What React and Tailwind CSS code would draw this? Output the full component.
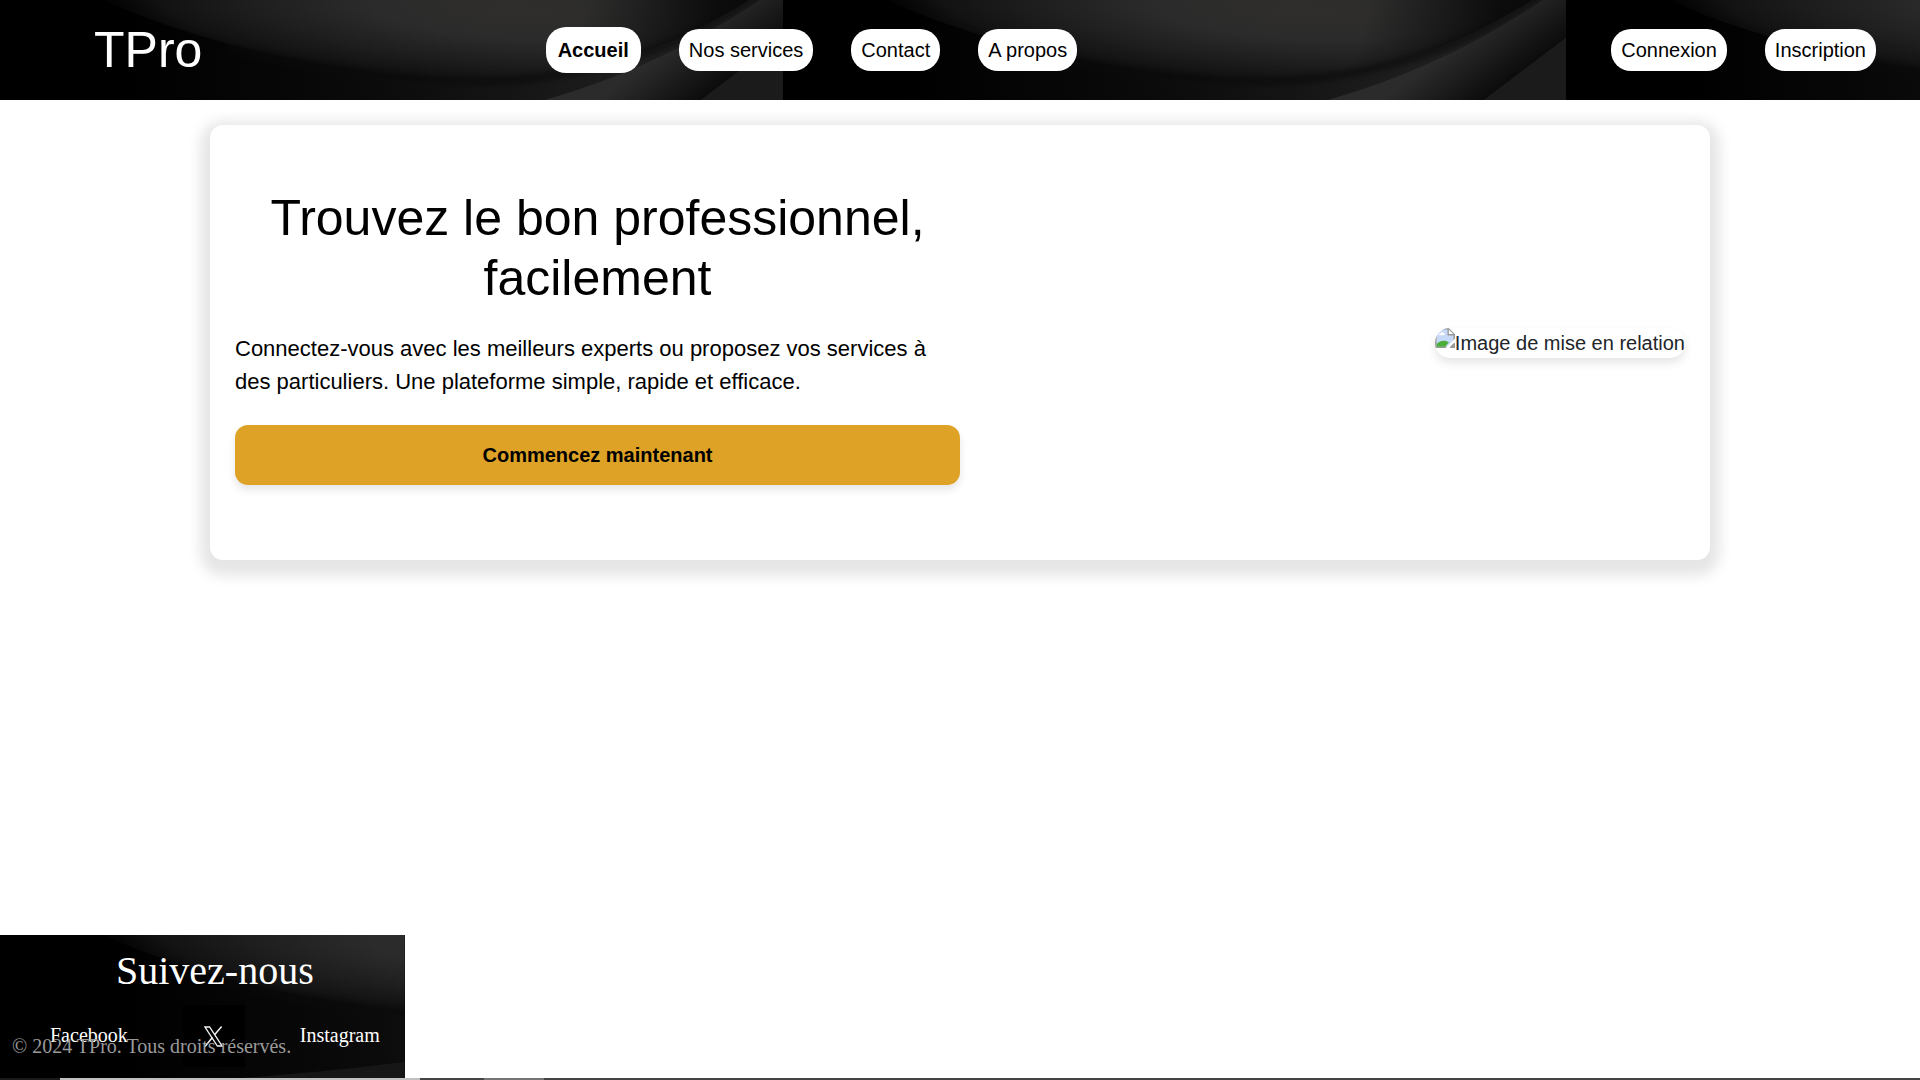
import { useId } from "react";

const mainLinks = [
  { label: "Nos services", href: "#services" },
  { label: "Contact", href: "#contact" },
  { label: "A propos", href: "#a-propos" },
];

const accountLinks = [
  { label: "Connexion", href: "#connexion" },
  { label: "Inscription", href: "#inscription" },
];

function DarkWaves() {
  const id = useId();
  const ref = (name) => `url(#${id}${name})`;
  return (
    <svg className="absolute inset-0 h-full w-full" aria-hidden="true">
      <defs>
        <radialGradient id={id + "glow"} gradientUnits="userSpaceOnUse" cx="0" cy="0" r="1" gradientTransform="translate(520 10) rotate(3) scale(430 84)">
          <stop offset="0" stopColor="#2f2e2c" />
          <stop offset="0.35" stopColor="#2b2b2b" />
          <stop offset="0.65" stopColor="#1d1d1d" />
          <stop offset="0.85" stopColor="#121212" />
          <stop offset="1" stopColor="#0c0c0c" stopOpacity="0" />
        </radialGradient>
        <linearGradient id={id + "shade"} gradientUnits="userSpaceOnUse" x1="590" y1="0" x2="710" y2="40">
          <stop offset="0" stopColor="#050505" stopOpacity="0" />
          <stop offset="1" stopColor="#050505" stopOpacity="0.8" />
        </linearGradient>
        <linearGradient id={id + "low"} gradientUnits="userSpaceOnUse" x1="120" y1="0" x2="640" y2="0">
          <stop offset="0" stopColor="#000" />
          <stop offset="0.5" stopColor="#0b0b0b" />
          <stop offset="1" stopColor="#1f1f1f" />
        </linearGradient>
        <linearGradient id={id + "sheet"} gradientUnits="userSpaceOnUse" x1="742" y1="68" x2="706" y2="20">
          <stop offset="0" stopColor="#0c0c0c" />
          <stop offset="0.45" stopColor="#1a1a1a" />
          <stop offset="1" stopColor="#2b2b2b" />
        </linearGradient>
        <filter id={id + "soft"} x="-5%" y="-20%" width="110%" height="140%" colorInterpolationFilters="sRGB">
          <feGaussianBlur stdDeviation="3" />
        </filter>
        <filter id={id + "fine"} x="-5%" y="-10%" width="110%" height="120%" colorInterpolationFilters="sRGB">
          <feGaussianBlur stdDeviation="0.7" />
        </filter>
        <pattern id={id + "tile"} width="783" height="520" patternUnits="userSpaceOnUse">
          <rect width="783" height="520" fill="#000" />
          <rect width="783" height="520" fill={ref("low")} />
          <path d="M60 -20 C140 20 220 46 317 63 C400 78 480 86 550 75 C640 62 710 28 780 -20 Z" fill={ref("glow")} filter={ref("fine")} />
          <path d="M60 -20 C140 20 220 46 317 63 C400 78 480 86 550 75 C640 62 710 28 780 -20 Z" fill={ref("shade")} />
          <path d="M230 46 C260 54 290 60 317 64 C400 79 480 88 550 76 C640 63 700 34 760 -6" fill="none" stroke="#0a0a0a" strokeWidth="8" opacity="0.7" filter={ref("soft")} />
          <path d="M545 100 C620 78 690 48 766 -4 L800 -4 L800 25 L701 100 L600 180 L400 180 Z" fill={ref("sheet")} filter={ref("fine")} />
          <path d="M700 101 L783 38 L783 180 L600 180 Z" fill="#1b1b1b" filter={ref("fine")} />
          <path d="M200 146 C290 140 350 134 420 125 L480 150 L480 180 L200 180 Z" fill="#161616" filter={ref("fine")} />
        </pattern>
      </defs>
      <rect width="100%" height="100%" fill={ref("tile")} />
    </svg>
  );
}

function PillLink({ label, href }) {
  return (
    <a href={href} className="rounded-[20px] bg-white px-2.5 py-1.5 text-xl/[30px] text-black">
      {label}
    </a>
  );
}

function BrokenImage({ alt }) {
  return (
    <div className="flex h-[30px] items-start overflow-hidden rounded-[15px] whitespace-nowrap text-xl/[30px] text-[#212529] shadow-[0_5px_10px_rgba(0,0,0,0.1)]">
      <svg className="h-5 w-5 shrink-0" viewBox="0 0 20 20" aria-hidden="true">
        <path d="M0.8 0.8 H13.5 L19.2 6.5 V19.2 H0.8 Z" fill="#c6d9f7" stroke="#9a9a9a" strokeWidth="1.6" />
        <path d="M13.2 1 V6.8 H19" fill="#fff" stroke="#9a9a9a" strokeWidth="1.4" />
        <path d="M4 7.2 C4 5.6 5.4 5.2 6 5.4 C6.6 3.8 8.8 4.2 9 5.6 C10 5.6 10.2 7 9.2 7.2 Z" fill="#fff" />
        <path d="M1.6 18.8 V16 C4 13 8 12 11 13 L14 14.5 L10 18.8 Z" fill="#4caf3c" />
        <path d="M10.6 20 L20 10.4 V14.4 L14.4 20 Z" fill="#fff" />
        <path d="M15 18.8 L19.2 14.8 V19.2 Z" fill="#9a9a9a" />
      </svg>
      <span>{alt}</span>
    </div>
  );
}

function XLogo() {
  return (
    <svg className="h-[21px] w-[19px]" viewBox="0 0 19 21" fill="none" stroke="#f2f2f2" aria-hidden="true">
      <path d="M1 1 H5.6 L18 20 H13.4 Z" strokeWidth="1.3" />
      <path d="M17.6 0.6 L10.6 8.8 M8.4 11.6 L1 20.4" strokeWidth="1.5" />
    </svg>
  );
}

function Taskbar() {
  return (
    <div className="flex h-0.5 bg-[#454445]" aria-hidden="true">
      <div className="w-15 bg-[#1a181a]" />
      <div className="w-90 bg-[#c0c0c0]" />
      <div className="w-16" />
      <div className="w-15 bg-[#757575]" />
    </div>
  );
}

export default function App() {
  return (
    <div className="flex min-h-screen flex-col bg-white font-['Liberation_Sans',Arial,sans-serif]">
      <header className="relative bg-black">
        <DarkWaves />
        <div className="relative flex h-25 items-center pr-11 pl-[94px]">
          <a href="#accueil" className="text-[50px]/[60px] text-white">
            TPro
          </a>
          <div className="grow-9" />
          <nav className="flex items-center gap-[38px]" aria-label="Navigation principale">
            <a
              href="#accueil"
              aria-current="page"
              className="rounded-[20px] bg-white px-3 py-2 text-xl/[30px] font-bold text-black"
            >
              Accueil
            </a>
            {mainLinks.map((link) => (
              <PillLink key={link.label} {...link} />
            ))}
          </nav>
          <div className="grow-14" />
          <nav className="flex items-center gap-[38px]" aria-label="Compte">
            {accountLinks.map((link) => (
              <PillLink key={link.label} {...link} />
            ))}
          </nav>
        </div>
      </header>

      <main className="grow px-6 py-[25px]">
        <section className="mx-auto grid max-w-[1500px] grid-cols-2 items-center rounded-[13px] bg-white px-[25px] py-[63px] shadow-[0_6px_13px_10px_rgba(0,0,0,0.1)]">
          <div className="flex flex-col pb-3">
            <h1 className="text-center text-[50px]/[60px] text-black">
              Trouvez le bon professionnel, facilement
            </h1>
            <p className="mt-6 text-[22px]/[33px] text-black">
              Connectez-vous avec les meilleurs experts ou proposez vos services à des particuliers.
              Une plateforme simple, rapide et efficace.
            </p>
            <button
              type="button"
              className="mt-[27px] h-15 rounded-[13px] bg-[#dea226] text-xl font-bold text-black shadow-[0_5px_8px_rgba(0,0,0,0.1)]"
            >
              Commencez maintenant
            </button>
          </div>
          <div className="flex justify-end">
            <BrokenImage alt="Image de mise en relation" />
          </div>
        </section>
      </main>

      <footer className="relative w-fit bg-black font-['Liberation_Serif','Times_New_Roman',serif] text-white">
        <DarkWaves />
        <div className="relative pt-3 pr-[25px] pb-[11px] pl-[50px]">
          <h2 className="text-center text-[40px]/[48px]">Suivez-nous</h2>
          <ul className="mt-2.5 flex items-start gap-[55px] text-xl/[30px]">
            <li className="pt-[15px]">
              <a href="#facebook">Facebook</a>
            </li>
            <li>
              <a href="#x" aria-label="X" className="flex h-[62px] w-[62px] items-center justify-center bg-black">
                <XLogo />
              </a>
            </li>
            <li className="pt-[15px]">
              <a href="#instagram">Instagram</a>
            </li>
          </ul>
        </div>
        <p className="absolute bottom-[17px] left-3 text-xl/[30px] whitespace-nowrap text-[#9a9a9a]">
          © 2024 TPro. Tous droits réservés.
        </p>
      </footer>
      <Taskbar />
    </div>
  );
}
